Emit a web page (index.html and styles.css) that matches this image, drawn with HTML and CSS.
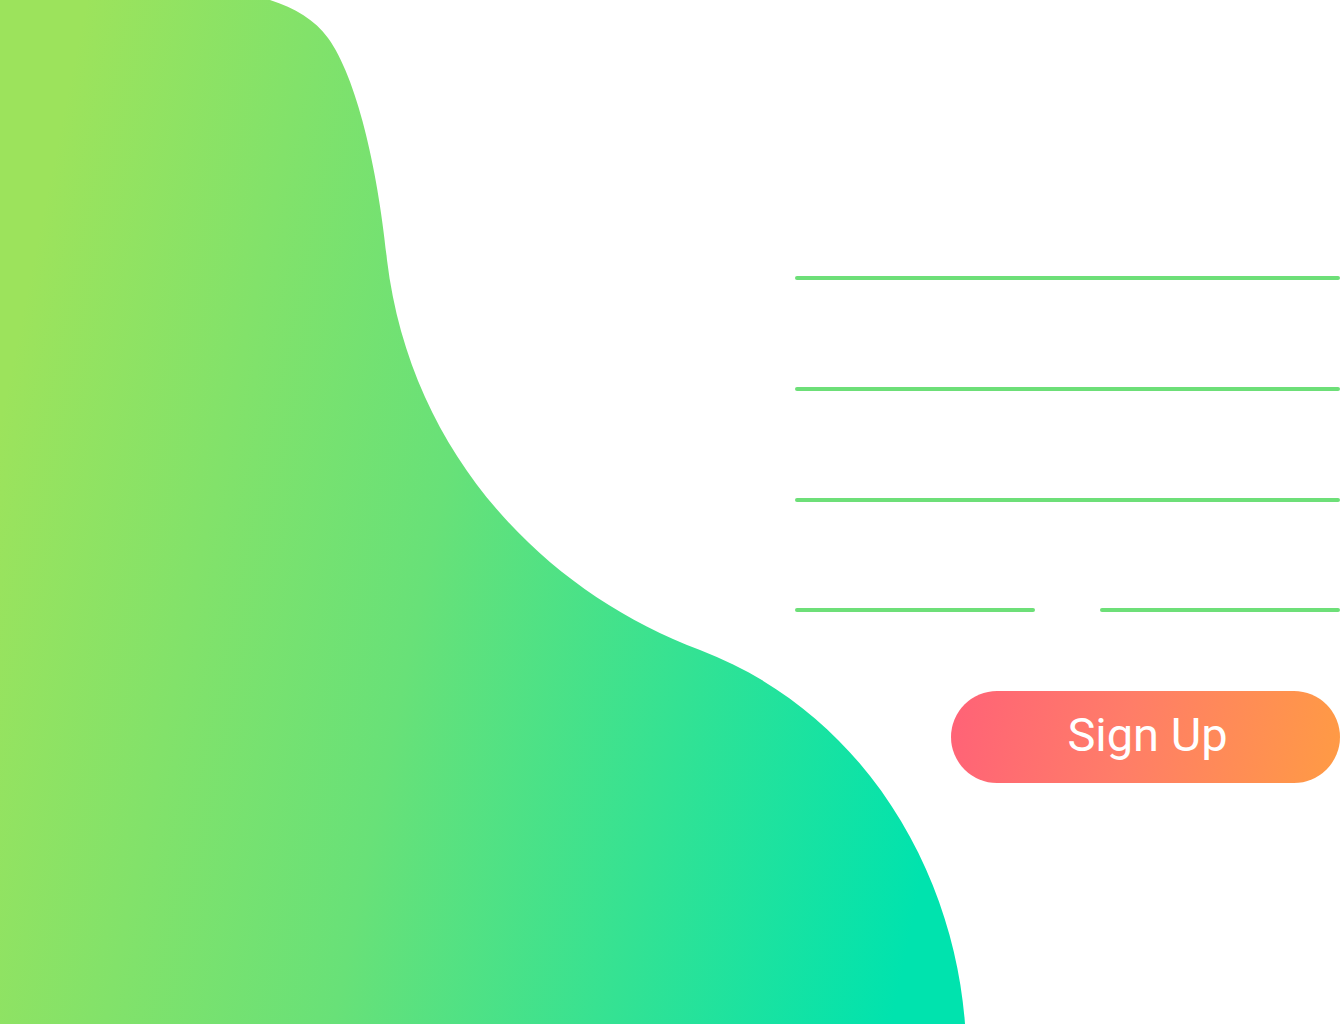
FILE: index.html
```html
<!DOCTYPE html>
<html lang="en">
<head>
<meta charset="utf-8">
<title>Sign Up</title>
<link rel="stylesheet" href="styles.css">
</head>
<body>
<div class="page">
  <svg class="blob" width="1340" height="1024" viewBox="0 0 1340 1024" aria-hidden="true">
    <defs>
      <linearGradient id="g" gradientUnits="userSpaceOnUse" x1="0" y1="420" x2="975" y2="620">
        <stop offset="0" stop-color="#9ce35c"/>
        <stop offset="0.45" stop-color="#68e178"/>
        <stop offset="1" stop-color="#00e3ae"/>
      </linearGradient>
    </defs>
    <path fill="url(#g)" d="M0,0 L270,0 C295,8 315,20 328,38 C357,78 378,170 387,260 C410,450 540,590 700,650 C870,715 955,880 965,1024 L0,1024 Z"/>
  </svg>
  <form class="form">
    <div class="line"></div>
    <div class="line"></div>
    <div class="line"></div>
    <div class="row">
      <div class="line half"></div>
      <div class="line half"></div>
    </div>
    <button type="button" class="btn">Sign Up</button>
  </form>
</div>
</body>
</html>
```
FILE: styles.css
```css
html, body {
  margin: 0;
  padding: 0;
  background: #ffffff;
  overflow: hidden;
}
.page {
  position: relative;
  width: 1340px;
  height: 1024px;
}
.blob {
  position: absolute;
  left: 0;
  top: 0;
}
.form {
  position: relative;
  margin: 0 0 0 795px;
  padding-top: 276px;
  width: 545px;
  display: flex;
  flex-direction: column;
  gap: 107px;
}
.line {
  height: 4px;
  border-radius: 2px;
  background: #6ddf78;
}
.row {
  display: flex;
  justify-content: space-between;
  margin-top: -1px;
}
.half {
  width: 240px;
}
.btn {
  align-self: flex-end;
  margin-top: -28px;
  width: 389px;
  height: 92px;
  border: none;
  border-radius: 46px;
  background: linear-gradient(100deg, #ff6277 0%, #ff7d68 45%, #ff9b44 100%);
  color: #ffffff;
  font-family: Roboto, "Liberation Sans", sans-serif;
  font-size: 47px;
  font-weight: 400;
  padding: 0 0 6px 4px;
  cursor: pointer;
}
```
